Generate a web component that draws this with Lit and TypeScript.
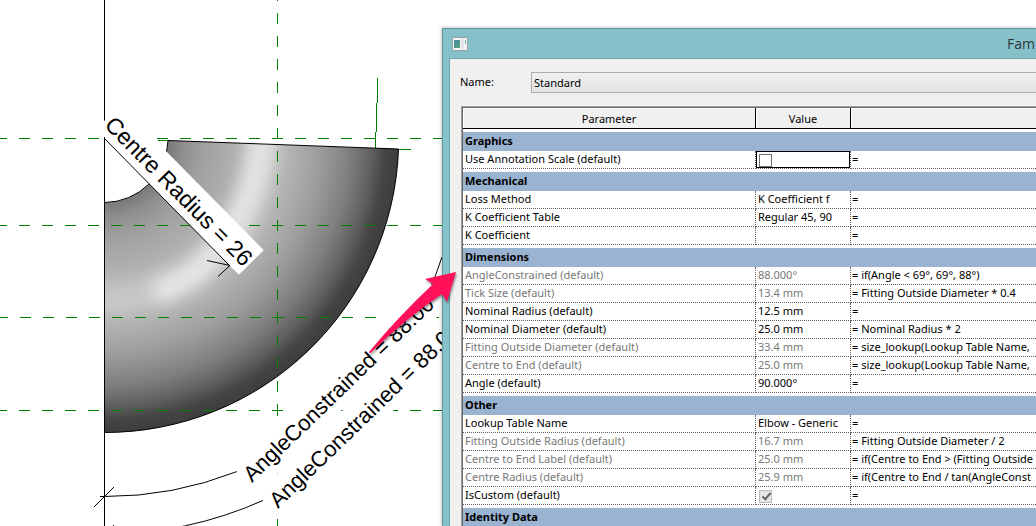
import { LitElement, html, css, svg, nothing } from "lit";
import { customElement } from "lit/decorators.js";
import { classMap } from "lit/directives/class-map.js";

interface Param {
  name: string;
  value?: string;
  formula?: string;
  locked?: boolean;
  check?: "on" | "off";
}

interface Group {
  title: string;
  rows: Param[];
}

const GROUPS: Group[] = [
  { title: "Graphics", rows: [{ name: "Use Annotation Scale (default)", check: "off" }] },
  {
    title: "Mechanical",
    rows: [
      { name: "Loss Method", value: "K Coefficient f" },
      { name: "K Coefficient Table", value: "Regular 45, 90" },
      { name: "K Coefficient" },
    ],
  },
  {
    title: "Dimensions",
    rows: [
      { name: "AngleConstrained (default)", value: "88.000°", formula: "if(Angle < 69°, 69°, 88°)", locked: true },
      { name: "Tick Size (default)", value: "13.4 mm", formula: "Fitting Outside Diameter * 0.4", locked: true },
      { name: "Nominal Radius (default)", value: "12.5 mm" },
      { name: "Nominal Diameter (default)", value: "25.0 mm", formula: "Nominal Radius * 2" },
      { name: "Fitting Outside Diameter (default)", value: "33.4 mm", formula: "size_lookup(Lookup Table Name,", locked: true },
      { name: "Centre to End (default)", value: "25.0 mm", formula: "size_lookup(Lookup Table Name,", locked: true },
      { name: "Angle (default)", value: "90.000°" },
    ],
  },
  {
    title: "Other",
    rows: [
      { name: "Lookup Table Name", value: "Elbow - Generic" },
      { name: "Fitting Outside Radius (default)", value: "16.7 mm", formula: "Fitting Outside Diameter / 2", locked: true },
      { name: "Centre to End Label (default)", value: "25.0 mm", formula: "if(Centre to End > (Fitting Outside", locked: true },
      { name: "Centre Radius (default)", value: "25.9 mm", formula: "if(Centre to End / tan(AngleConst", locked: true },
      { name: "IsCustom (default)", check: "on" },
    ],
  },
  { title: "Identity Data", rows: [] },
];

@customElement("elbow-drawing")
export class ElbowDrawing extends LitElement {
  static styles = css`
    :host {
      display: block;
      overflow: hidden;
    }
    .sheet {
      display: block;
      font-family: "Liberation Sans", Arial, sans-serif;
    }
    .plane {
      stroke: #008000;
      fill: none;
      shape-rendering: crispEdges;
    }
    .dashed {
      stroke-dasharray: 11 12;
    }
    .ink {
      stroke: #000;
      fill: none;
    }
    .crisp {
      shape-rendering: crispEdges;
    }
    .mask {
      fill: #fff;
    }
    .radius {
      font-size: 23px;
    }
    .angle {
      font-size: 22px;
    }
  `;

  render() {
    const sector = "M104.5 202.5 A64 64 0 0 0 168 140.5 L398.5 149 A294 294 0 0 1 104.5 432.5 Z";
    return html`
      <svg class="sheet" width="442" height="526" viewBox="0 0 442 526" role="img" aria-label="Elbow fitting plan">
        ${svg`
        <defs>
          <radialGradient id="body" gradientUnits="userSpaceOnUse" cx="104" cy="138" r="294">
            <stop offset=".218" stop-color="#787878" />
            <stop offset=".27" stop-color="#8e8e8e" />
            <stop offset=".34" stop-color="#a0a0a0" />
            <stop offset=".45" stop-color="#b0b0b0" />
            <stop offset=".52" stop-color="#c4c4c4" />
            <stop offset=".57" stop-color="#c8c8c8" />
            <stop offset=".63" stop-color="#b4b4b4" />
            <stop offset=".74" stop-color="#9c9c9c" />
            <stop offset=".84" stop-color="#7e7e7e" />
            <stop offset=".91" stop-color="#606060" />
            <stop offset=".96" stop-color="#444" />
            <stop offset="1" stop-color="#3e3e3e" />
          </radialGradient>
          <clipPath id="sector"><path d=${sector} /></clipPath>
          <filter id="soft" x="-30%" y="-30%" width="160%" height="160%"><feGaussianBlur stdDeviation="8" /></filter>
        </defs>
        <path d=${sector} fill="url(#body)" />
        <g clip-path="url(#sector)">
          <path d="M262 125 Q257 180 240 212 Q222 252 190 276 Q172 286 155 294" fill="none" stroke="#fff"
            stroke-opacity=".55" stroke-width="24" filter="url(#soft)" />
        </g>
        <path class="plane dashed" d="M-4 138.5H442" />
        <path class="plane dashed" d="M-4 225.5H442" />
        <path class="plane dashed" d="M-3 317.5H442" />
        <path class="plane dashed" d="M-4 410.5H442" />
        <path class="plane dashed" d="M277.5 -10V526" />
        <path class="plane" d="M272 225.5H283M277.5 220V231M272 317.5H283M277.5 312V323M272 410.5H283M277.5 405V416" />
        <path class="plane" d="M158 140.5H168M398 149.5H411M377.5 78V103M376.5 103V132M375.5 132V148" />
        <path class="ink" d=${sector} />
        <path class="ink crisp" d="M104.5 0V526" />
        <path class="ink" d="M100 496.5H104.5A358 358 0 0 0 237 471.5M104.5 534.5A396 396 0 0 0 263 500.5M429 291A358 358 0 0 0 442 257" />
        <path class="ink" d="M94 507L114 487M94 545L114 525" />
        <g transform="translate(104 138) rotate(45.4)">
          <rect class="mask" x="-12" y="-35" width="204" height="35" />
          <text class="radius" x="-9" y="-8">Centre Radius = 26</text>
        </g>
        <path class="ink crisp" d="M104.5 137V150" />
        <path class="ink" d="M104 138L230 266M207 260.500L230 265.500L218 276.500" />
        <g transform="translate(252 483) rotate(-44)">
          <rect class="mask" x="-3" y="-26" width="270" height="35" />
          <text class="angle" x="0" y="0">AngleConstrained = 88.00</text>
        </g>
        <g transform="translate(278 509) rotate(-44)">
          <rect class="mask" x="-3" y="-26" width="270" height="35" />
          <text class="angle" x="0" y="0">AngleConstrained = 88.0</text>
        </g>
        `}
      </svg>
    `;
  }
}

@customElement("family-types")
export class FamilyTypes extends LitElement {
  static styles = css`
    :host {
      display: block;
      box-sizing: border-box;
      overflow: hidden;
      border: solid #5f979e;
      border-width: 1px 0 0 1px;
      background: #86c0c9;
      box-shadow: 0 0 4px rgba(0, 0, 0, 0.3);
      font: 11px/15px "Noto Sans", "Open Sans", sans-serif;
      color: #000;
    }
    .title {
      display: flex;
      align-items: center;
      justify-content: space-between;
      height: 29px;
      padding: 0 1px 0 9px;
      font-size: 14px;
      color: #2c3a3c;
    }
    .heading {
      margin: 0;
      font: 14px/19px "Open Sans", "Noto Sans", sans-serif;
    }
    .client {
      margin-left: 6px;
      padding: 13px 0 0 10px;
      border: solid #6fa5ad;
      border-width: 1px 0 0 1px;
      background: #f0f0f0;
    }
    .namebar {
      display: flex;
      align-items: flex-start;
      margin-bottom: 13px;
    }
    .namelabel {
      flex: 0 0 71px;
      line-height: 19px;
    }
    .type {
      appearance: none;
      flex: 1;
      height: 21px;
      margin: 0;
      padding: 0 2px;
      border: 1px solid #acacac;
      border-right: 0;
      border-radius: 0;
      background: linear-gradient(#f0f0f0, #e4e4e4);
      font: inherit;
      color: inherit;
    }
    .frame {
      margin-left: 1px;
      border: solid #a0a0a0;
      border-width: 1px 0 0 1px;
    }
    .grid {
      width: 100%;
      border: solid #696969;
      border-width: 1px 0 0 1px;
      border-spacing: 0;
      table-layout: fixed;
      background: #fff;
    }
    .cname {
      width: 293px;
    }
    .cvalue {
      width: 95px;
    }
    .head {
      box-sizing: border-box;
      height: 21px;
      padding: 0;
      border-right: 1px solid #000;
      border-bottom: 1px solid #000;
      background: #f0f0f0;
      box-shadow: inset 1px 1px #fff;
      font-weight: 400;
      text-align: center;
    }
    .head:last-child {
      border-right: 0;
    }
    .group {
      height: 19px;
      padding: 0 2px;
      border-top: 3px solid #fff;
      background: #9ab3d1;
      background-clip: padding-box;
      font-weight: 700;
      line-height: 17px;
      text-align: left;
      vertical-align: top;
    }
    .cell {
      height: 17px;
      padding: 0 0 0 2px;
      border-bottom: 1px dotted #606060;
      font-weight: 400;
      text-align: left;
      vertical-align: top;
      white-space: nowrap;
      overflow: hidden;
    }
    .name,
    .value {
      border-right: 1px dotted #606060;
    }
    .formula {
      padding-left: 1px;
    }
    .locked {
      color: #787878;
    }
    .current {
      box-shadow: inset 0 0 0 1px #000;
    }
    .tick {
      appearance: none;
      display: block;
      box-sizing: border-box;
      width: 13px;
      height: 13px;
      margin: 3px 1px 1px;
      border: 1px solid #707070;
      background: #fff;
    }
    .tick:disabled {
      border-color: #bcbcbc;
      background: #e6e6e6;
    }
    .tick:checked::before {
      content: "";
      display: block;
      width: 3px;
      height: 7px;
      margin: 0 0 0 4px;
      border: solid #666;
      border-width: 0 2px 2px 0;
      transform: rotate(40deg);
    }
  `;

  private row(p: Param, id: string) {
    return html`
      <tr>
        <th scope="row" class=${classMap({ cell: true, name: true, locked: !!p.locked })}>
          ${p.check ? html`<label for=${id}>${p.name}</label>` : p.name}
        </th>
        <td class=${classMap({ cell: true, value: true, locked: !!p.locked, current: p.check === "off" })}>
          ${p.check
            ? html`<input class="tick" type="checkbox" id=${id} ?checked=${p.check === "on"} ?disabled=${p.check === "on"} />`
            : p.value ?? nothing}
        </td>
        <td class="cell formula">= ${p.formula ?? nothing}</td>
      </tr>
    `;
  }

  render() {
    return html`
      <header class="title">
        <svg width="16" height="14" viewBox="0 0 16 14" aria-hidden="true">
          <defs>
            <linearGradient id="pane" x2="1" y2="1">
              <stop offset="0" stop-color="#4a86a8" />
              <stop offset="1" stop-color="#4fa878" />
            </linearGradient>
          </defs>
          <rect x=".5" y=".5" width="15" height="13" rx="1" fill="#f4f4f4" stroke="#9b9fa3" />
          <rect x="2" y="3" width="6" height="8" fill="url(#pane)" />
          <rect x="9" y="2" width="3" height="10" fill="#e4e4e8" />
          <rect x="13" y="3" width="1" height="4" fill="#6fb59a" />
        </svg>
        <h1 class="heading">Fam</h1>
      </header>
      <div class="client">
        <div class="namebar">
          <label class="namelabel" for="type">Name:</label>
          <select class="type" id="type"><option>Standard</option></select>
        </div>
        <div class="frame">
          <table class="grid">
            <colgroup><col class="cname" /><col class="cvalue" /><col /></colgroup>
            <thead>
              <tr>
                <th class="head" scope="col">Parameter</th>
                <th class="head" scope="col">Value</th>
                <td class="head"></td>
              </tr>
            </thead>
            ${GROUPS.map(
              (g, i) => html`
                <tbody>
                  <tr><th class="group" scope="rowgroup" colspan="3">${g.title}</th></tr>
                  ${g.rows.map((p, j) => this.row(p, `p${i}-${j}`))}
                </tbody>
              `
            )}
          </table>
        </div>
      </div>
    `;
  }
}

@customElement("app-root")
export class AppRoot extends LitElement {
  static styles = css`
    :host {
      display: flex;
      position: relative;
      height: 100vh;
      overflow: hidden;
      background: #fff;
    }
    .drawing {
      flex: 0 0 442px;
    }
    .dialog {
      flex: 1;
      min-width: 0;
      margin-top: 28px;
    }
    .pointer {
      position: absolute;
      left: 360px;
      top: 262px;
      filter: drop-shadow(1px 2px 1px rgba(0, 0, 0, 0.4));
    }
  `;

  render() {
    return html`
      <elbow-drawing class="drawing"></elbow-drawing>
      <family-types class="dialog"></family-types>
      <svg class="pointer" width="104" height="100" viewBox="360 262 104 100" aria-hidden="true">
        <path fill="#ff1059" d="M456 272L447 302L442 294Q405 319 370 353.500L369 352Q398 317 433 284L425 279Z" />
      </svg>
    `;
  }
}
